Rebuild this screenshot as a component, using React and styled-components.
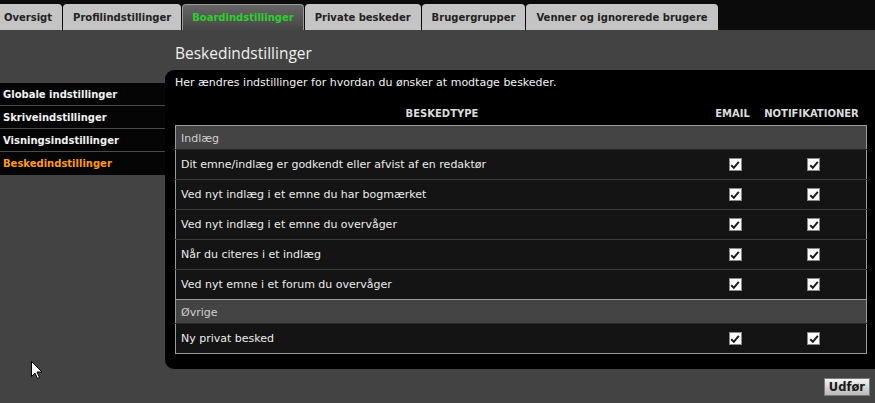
import React from 'react';
import styled, { createGlobalStyle } from 'styled-components';

const GlobalStyle = createGlobalStyle`
  html, body {
    margin: 0;
    padding: 0;
    background: #434343;
    font-family: Tahoma, "DejaVu Sans", sans-serif;
    font-size: 11px;
    color: #eee;
  }
  * { box-sizing: border-box; }
`

const Page = styled.div`
  position: relative;
  width: 875px;
  height: 403px;
  overflow: hidden;
`

const TabBar = styled.div`
  display: flex;
  align-items: flex-end;
  gap: 1px;
  height: 30px;
  padding: 0;
  background: #0b0b0b;
`

const Tab = styled.div`
  height: 26px;
  padding: 0 9px;
  display: flex;
  align-items: center;
  border-radius: 4px 4px 0 0;
  font-weight: bold;
  font-size: 10px;
  color: ${props => props.active ? '#2bd12b' : '#222'};
  background: ${props => props.active ? 'linear-gradient(#666, #454545)' : '#c4c4c4'};
  border: 1px solid ${props => props.active ? '#9a9a9a' : '#c4c4c4'};
  border-bottom: none;
  &:first-child { margin-left: -6px; }
`

const Main = styled.div`
  display: grid;
  grid-template-columns: 165px 1fr;
`

const Sidebar = styled.ul`
  list-style: none;
  margin: 0;
  padding: 53px 0 0 0;
`

const SideItem = styled.li`
  height: 23px;
  display: flex;
  align-items: center;
  padding-left: 3px;
  background: #050505;
  border-bottom: 1px solid ${props => props.last ? '#050505' : '#4a4a4a'};
  font-weight: bold;
  font-size: 10px;
  color: ${props => props.active ? '#ff9a1a' : '#f2f2f2'};
`

const Content = styled.div`
  padding-top: 12px;
`

const Title = styled.h2`
  margin: 0 0 0 10px;
  height: 28px;
  font-family: "Open Sans", "DejaVu Sans", sans-serif;
  font-weight: normal;
  font-size: 15.5px;
  line-height: 22px;
  color: #f0f0f0;
`

const Panel = styled.div`
  background: #000;
  border-radius: 9px 0 0 9px;
  padding: 4px 8px 15px 10px;
`

const Intro = styled.p`
  margin: 0;
  height: 28px;
  line-height: 18px;
  font-size: 11px;
  color: #f2f2f2;
`

const Table = styled.table`
  width: 100%;
  border-collapse: collapse;
`

const HeadCell = styled.th`
  height: 23px;
  padding: 0;
  font-size: 10px;
  font-weight: bold;
  color: #dcdcdc;
  text-align: center;
  width: ${props => props.w ? props.w + 'px' : 'auto'};
`

const Body = styled.tbody`
  border: 1px solid #9c9c9c;
`

const GroupCell = styled.td`
  height: 24px;
  padding: 2px 0 0 5px;
  background: #444;
  color: #cfcfcf;
  font-size: 11px;
  border-bottom: 1px solid #2a2a2a;
`

const Row = styled.tr`
  background: #141414;
  border-bottom: 1px solid #3c3c3c;
  &:last-child { border-bottom: none; }
`

const Cell = styled.td`
  height: 30px;
  padding: 1px 0 0 5px;
  font-size: 11px;
  color: #ececec;
  text-align: ${props => props.center ? 'center' : 'left'};
`

const Check = styled.span`
  display: inline-flex;
  align-items: center;
  justify-content: center;
  width: 13px;
  height: 13px;
  background: #fff;
  border: 1px solid #8a8a8a;
  vertical-align: middle;
`

const Footer = styled.div`
  display: flex;
  justify-content: flex-end;
  padding: 9px 5px 0 0;
`

const Button = styled.button`
  height: 18px;
  padding: 0 4px;
  font-family: Tahoma, "DejaVu Sans", sans-serif;
  font-weight: bold;
  font-size: 11.5px;
  color: #1a1a1a;
  background: linear-gradient(#f4f4f4, #b9b9b9);
  border: 1px solid #7a7a7a;
  border-radius: 0;
`

const Cursor = styled.svg`
  position: absolute;
  left: 31px;
  top: 361px;
`

const tabs = [
  { label: 'Oversigt' },
  { label: 'Profilindstillinger' },
  { label: 'Boardindstillinger', active: true },
  { label: 'Private beskeder' },
  { label: 'Brugergrupper' },
  { label: 'Venner og ignorerede brugere' },
];

const sideItems = [
  { label: 'Globale indstillinger' },
  { label: 'Skriveindstillinger' },
  { label: 'Visningsindstillinger' },
  { label: 'Beskedindstillinger', active: true },
];

const groups = [
  {
    name: 'Indlæg',
    rows: [
      'Dit emne/indlæg er godkendt eller afvist af en redaktør',
      'Ved nyt indlæg i et emne du har bogmærket',
      'Ved nyt indlæg i et emne du overvåger',
      'Når du citeres i et indlæg',
      'Ved nyt emne i et forum du overvåger',
    ],
  },
  {
    name: 'Øvrige',
    rows: ['Ny privat besked'],
  },
];

function CheckBox() {
  return (
    <Check>
      <svg width="10" height="10" viewBox="0 0 10 10">
        <path d="M1.2 5.2 L3.8 7.8 L8.8 1.8" fill="none" stroke="#1c1c1c" strokeWidth="2" />
      </svg>
    </Check>
  )
}

function App() {
  return (
    <Page>
      <GlobalStyle />
      <TabBar>
        {tabs.map(t => <Tab key={t.label} active={t.active}>{t.label}</Tab>)}
      </TabBar>
      <Main>
        <Sidebar>
          {sideItems.map((s, i) => (
            <SideItem key={s.label} active={s.active} last={i === sideItems.length - 1}>{s.label}</SideItem>
          ))}
        </Sidebar>
        <Content>
          <Title>Beskedindstillinger</Title>
          <Panel>
            <Intro>Her ændres indstillinger for hvordan du ønsker at modtage beskeder.</Intro>
            <Table>
              <thead>
                <tr>
                  <HeadCell>BESKEDTYPE</HeadCell>
                  <HeadCell w={48}>EMAIL</HeadCell>
                  <HeadCell w={110}>NOTIFIKATIONER</HeadCell>
                </tr>
              </thead>
              {groups.map(g => (
                <Body key={g.name}>
                  <tr>
                    <GroupCell colSpan={3}>{g.name}</GroupCell>
                  </tr>
                  {g.rows.map(r => (
                    <Row key={r}>
                      <Cell>{r}</Cell>
                      <Cell center><CheckBox /></Cell>
                      <Cell center><CheckBox /></Cell>
                    </Row>
                  ))}
                </Body>
              ))}
            </Table>
          </Panel>
          <Footer>
            <Button>Udfør</Button>
          </Footer>
        </Content>
      </Main>
      <Cursor width="12" height="19" viewBox="0 0 12 19">
        <path d="M0.5 0.5 L0.5 15.5 L4 12 L6.5 17.5 L8.5 16.5 L6 11 L11 11 Z" fill="#fff" stroke="#000" strokeWidth="1" />
      </Cursor>
    </Page>
  )
}

export default App;
